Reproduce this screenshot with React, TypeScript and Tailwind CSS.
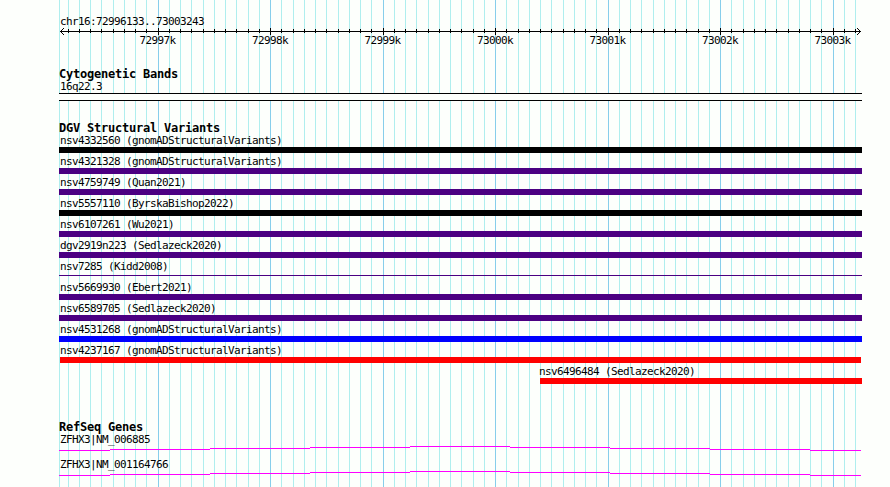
import { clsx } from "clsx";

const LEFT = 59;
const WIDTH = 803;

// x of every 100 bp line, the majors mark a full kilobase
const MINOR = [
  68, 79, 90, 101, 113, 124, 135, 146, 169, 180, 191, 203, 214, 225, 236, 248, 259, 281, 293, 304, 315, 326,
  338, 349, 360, 371, 394, 405, 416, 428, 439, 450, 461, 473, 484, 506, 518, 529, 540, 551, 563, 574, 585, 596,
  619, 630, 641, 653, 664, 675, 686, 698, 709, 731, 743, 754, 765, 776, 788, 799, 810, 821, 844, 855,
];

const MAJOR = [
  { x: 158, label: "72997k" },
  { x: 270, label: "72998k" },
  { x: 383, label: "72999k" },
  { x: 495, label: "73000k" },
  { x: 608, label: "73001k" },
  { x: 720, label: "73002k" },
  { x: 833, label: "73003k" },
];

const VARIANTS = [
  { name: "nsv4332560 (gnomADStructuralVariants)", bar: "h-1.5 bg-black" },
  { name: "nsv4321328 (gnomADStructuralVariants)", bar: "h-1.5 bg-[#4b0082]" },
  { name: "nsv4759749 (Quan2021)", bar: "h-1.5 bg-[#4b0082]" },
  { name: "nsv5557110 (ByrskaBishop2022)", bar: "h-1.5 bg-black" },
  { name: "nsv6107261 (Wu2021)", bar: "h-1.5 bg-[#4b0082]" },
  { name: "dgv2919n223 (Sedlazeck2020)", bar: "h-1.5 bg-[#4b0082]" },
  { name: "nsv7285 (Kidd2008)", bar: "mt-0.5 h-px bg-[#4b0082]" },
  { name: "nsv5669930 (Ebert2021)", bar: "h-1.5 bg-[#4b0082]" },
  { name: "nsv6589705 (Sedlazeck2020)", bar: "h-1.5 bg-[#4b0082]" },
  { name: "nsv4531268 (gnomADStructuralVariants)", bar: "h-1.5 bg-[#0000ff]" },
  { name: "nsv4237167 (gnomADStructuralVariants)", bar: "mx-px h-1.5 bg-[#ff0000]" },
  { name: "nsv6496484 (Sedlazeck2020)", bar: "h-1.5 bg-[#ff0000]", row: "pl-[481px]", text: "-ml-px" },
];

const GENES = ["ZFHX3|NM_006885", "ZFHX3|NM_001164766"];

function GridLines() {
  return (
    <svg className="absolute inset-0" width="890" height="487" shapeRendering="crispEdges">
      <rect x={LEFT} y="0" width="1" height="487" fill="#afeeee" />
      {MINOR.map((x) => (
        <rect key={x} x={x} y="0" width="1" height="487" fill="#afeeee" />
      ))}
      {MAJOR.map(({ x }) => (
        <rect key={x} x={x} y="0" width="1" height="487" fill="#87ceeb" />
      ))}
    </svg>
  );
}

function Axis() {
  return (
    <div className="mt-px">
      <svg className="block" width={WIDTH} height="7" viewBox={`${LEFT} 0 ${WIDTH} 7`} shapeRendering="crispEdges">
        <rect x="60" y="3" width="801" height="1" />
        {MINOR.map((x) => (
          <rect key={x} x={x} y="1" width="1" height="4" />
        ))}
        {MAJOR.map(({ x }) => (
          <rect key={x} x={x} y="0" width="1" height="7" />
        ))}
        <path d="M61 2h1v1h-1zM62 1h1v1h-1zM63 0h1v1h-1zM61 4h1v1h-1zM62 5h1v1h-1zM63 6h1v1h-1z" />
        <path d="M859 2h1v1h-1zM858 1h1v1h-1zM857 0h1v1h-1zM859 4h1v1h-1zM858 5h1v1h-1zM857 6h1v1h-1z" />
      </svg>
      <div className="flex h-[11px] gap-[76.5px] pl-[80.5px]">
        {MAJOR.map(({ label }) => (
          <span key={label} className="w-9">
            {label}
          </span>
        ))}
      </div>
    </div>
  );
}

function TrackTitle({ children }: { children: string }) {
  return <h2 className="text-[12px] leading-[12px] font-bold tracking-[-0.224px]">{children}</h2>;
}

function GeneLine() {
  return (
    <svg className="block" width={WIDTH} height="5" viewBox={`${LEFT} 0 ${WIDTH} 5`} shapeRendering="crispEdges">
      <g fill="#ff00ff">
        <rect x="59" y="4" width="51" height="1" />
        <rect x="110" y="3" width="100" height="1" />
        <rect x="210" y="2" width="100" height="1" />
        <rect x="310" y="1" width="100" height="1" />
        <rect x="410" y="0" width="100" height="1" />
        <rect x="510" y="1" width="100" height="1" />
        <rect x="610" y="2" width="100" height="1" />
        <rect x="710" y="3" width="100" height="1" />
        <rect x="810" y="4" width="51" height="1" />
      </g>
    </svg>
  );
}

export default function App() {
  return (
    <main className="relative h-[487px] w-[890px] overflow-hidden bg-[#fdfffc] font-['DejaVu_Sans_Mono',monospace] text-[11px] leading-[11px] tracking-[-0.622px] whitespace-pre text-black">
      <GridLines />
      <div className="relative ml-[59px] flex w-[803px] flex-col pt-4">
        <header>
          <div className="pl-px">chr16:72996133..73003243</div>
          <Axis />
        </header>

        <section className="mt-[22px]">
          <TrackTitle>Cytogenetic Bands</TrackTitle>
          <div className="mt-px pl-px">16q22.3</div>
          <div className="mt-px h-2 border-y border-black bg-[#fdfffc]" />
        </section>

        <section className="mt-[21px]">
          <TrackTitle>DGV Structural Variants</TrackTitle>
          <ul className="mt-px flex flex-col gap-[3px]">
            {VARIANTS.map((v) => (
              <li key={v.name} className={clsx("h-[18px]", v.row)}>
                <div className={v.text ?? "pl-px"}>{v.name}</div>
                <div className="pt-px">
                  <div className={v.bar} />
                </div>
              </li>
            ))}
          </ul>
        </section>

        <section className="mt-[37px]">
          <TrackTitle>RefSeq Genes</TrackTitle>
          <ul className="mt-px flex flex-col gap-[8px]">
            {GENES.map((name) => (
              <li key={name} className="h-[17px]">
                <div className="mb-px pl-px">{name}</div>
                <GeneLine />
              </li>
            ))}
          </ul>
        </section>
      </div>
    </main>
  );
}
